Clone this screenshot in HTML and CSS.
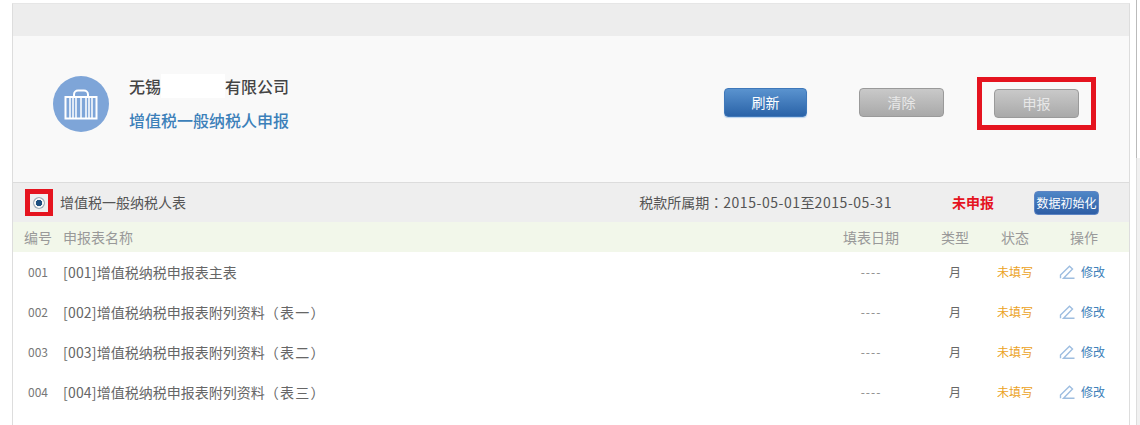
FILE: index.html
```html
<!DOCTYPE html>
<html lang="zh">
<head>
<meta charset="utf-8">
<title>增值税一般纳税人申报</title>
<link rel="stylesheet" href="styles.css">
</head>
<body>
<div class="scrollbar"><div class="scroll-thumb"></div></div>
<main class="panel">
  <div class="topbar"></div>
  <section class="hero">
    <svg class="logo" width="56" height="56" viewBox="0 0 56 56">
      <circle cx="28" cy="28" r="28" fill="#7ea5d8"/>
      <path d="M21 21v-2.500a4 4 0 0 1 4-4h6a4 4 0 0 1 4 4V21" fill="none" stroke="#fff" stroke-width="2"/>
      <rect x="12.500" y="21" width="31" height="21.500" fill="none" stroke="#fff" stroke-width="2"/>
      <path d="M17 22v20M20 22v20M23 22v20M28 22v20M33 22v20M36 22v20M39 22v20" stroke="#fff" stroke-width="1.500"/>
    </svg>
    <div class="hero-text">
      <div class="company"><span>无锡</span><span class="redacted"></span><span>有限公司</span></div>
      <div class="subtitle">增值税一般纳税人申报</div>
    </div>
    <div class="actions">
      <button class="btn btn-blue">刷新</button>
      <button class="btn btn-gray">清除</button>
      <div class="mark mark-btn"><button class="btn btn-gray">申报</button></div>
    </div>
  </section>
  <section class="section-bar">
    <div class="mark mark-radio"><span class="radio"></span></div>
    <span class="section-title">增值税一般纳税人表</span>
    <span class="period"><span lang="zh-TW">税款所属期：</span><span class="date">2015-05-01</span>至<span class="date">2015-05-31</span></span>
    <span class="unfiled">未申报</span>
    <button class="btn-init">数据初始化</button>
  </section>
  <div class="row row-head">
    <span>编号</span><span>申报表名称</span><span class="c">填表日期</span><span class="c">类型</span><span class="c">状态</span><span class="op-head">操作</span>
  </div>
  <div class="row">
    <span class="no">001</span><span class="name"><span class="code">[001]</span>增值税纳税申报表主表</span><span class="c dash">----</span><span class="c cell">月</span><span class="c status">未填写</span>
    <a class="op"><svg class="pen" width="16" height="14" viewBox="0 0 16 14"><path d="M1.500 13.200V10l9-8.800 3 2.800-9 9.200H15.500" fill="none" stroke="#9dbde0" stroke-width="1.400"/></svg>修改</a>
  </div>
  <div class="row">
    <span class="no">002</span><span class="name"><span class="code">[002]</span>增值税纳税申报表附列资料<span class="suffix">（表一）</span></span><span class="c dash">----</span><span class="c cell">月</span><span class="c status">未填写</span>
    <a class="op"><svg class="pen" width="16" height="14" viewBox="0 0 16 14"><path d="M1.500 13.200V10l9-8.800 3 2.800-9 9.200H15.500" fill="none" stroke="#9dbde0" stroke-width="1.400"/></svg>修改</a>
  </div>
  <div class="row">
    <span class="no">003</span><span class="name"><span class="code">[003]</span>增值税纳税申报表附列资料<span class="suffix">（表二）</span></span><span class="c dash">----</span><span class="c cell">月</span><span class="c status">未填写</span>
    <a class="op"><svg class="pen" width="16" height="14" viewBox="0 0 16 14"><path d="M1.500 13.200V10l9-8.800 3 2.800-9 9.200H15.500" fill="none" stroke="#9dbde0" stroke-width="1.400"/></svg>修改</a>
  </div>
  <div class="row">
    <span class="no">004</span><span class="name"><span class="code">[004]</span>增值税纳税申报表附列资料<span class="suffix">（表三）</span></span><span class="c dash">----</span><span class="c cell">月</span><span class="c status">未填写</span>
    <a class="op"><svg class="pen" width="16" height="14" viewBox="0 0 16 14"><path d="M1.500 13.200V10l9-8.800 3 2.800-9 9.200H15.500" fill="none" stroke="#9dbde0" stroke-width="1.400"/></svg>修改</a>
  </div>
  <div class="row">
    <span class="no">005</span><span class="name"><span class="code">[005]</span>增值税纳税申报表附列资料<span class="suffix">（表四）</span></span><span class="c dash">----</span><span class="c cell">月</span><span class="c status">未填写</span>
    <a class="op"><svg class="pen" width="16" height="14" viewBox="0 0 16 14"><path d="M1.500 13.200V10l9-8.800 3 2.800-9 9.200H15.500" fill="none" stroke="#9dbde0" stroke-width="1.400"/></svg>修改</a>
  </div>
</main>
</body>
</html>
```
FILE: styles.css
```css
* { box-sizing: border-box; }
html, body { height: 425px; overflow: hidden; }
body {
  margin: 0;
  padding: 3px 0 0 12px;
  background: #fff;
  font-family: "Noto Sans CJK SC", "Liberation Sans", sans-serif;
  color: #555;
}
[lang="zh-TW"] { font-family: "Noto Sans CJK TC", "Noto Sans CJK SC", sans-serif; }
.scrollbar {
  position: absolute;
  top: 0;
  left: 1136px;
  width: 4px;
  height: 425px;
  background: #f1f1f1;
  border-left: 1px solid #ddd;
}
.scroll-thumb { height: 158px; background: #fff; border-left: 1px solid #bbb; margin-left: -1px; }
.panel {
  width: 1118px;
  border-left: 1px solid #ddd;
  border-right: 1px solid #ddd;
  border-top: 1px solid #e6e6e6;
  background: #fff;
}
.topbar { height: 32px; background: #ededed; }
.hero {
  display: flex;
  align-items: flex-start;
  height: 147px;
  padding: 40px 33px 0 40px;
  background: #f9f9f9;
  border-bottom: 1px solid #dcdcdc;
}
.logo { flex: none; }
.hero-text { margin-left: 20px; margin-top: -2px; font-size: 16px; font-weight: 500; }
.company { display: flex; height: 24px; line-height: 24px; color: #444; }
.redacted { width: 64px; background: #fff; }
.subtitle { margin-top: 10px; height: 24px; line-height: 24px; color: #3c80b9; }
.actions { display: flex; margin-left: auto; margin-top: 12px; align-items: flex-start; }
.btn {
  width: 85px;
  height: 29px;
  padding: 0;
  border-radius: 4px;
  font: 14px/27px "Noto Sans CJK SC", "Liberation Sans", sans-serif;
  color: #fff;
}
.btn-blue {
  width: 83px;
  background: linear-gradient(#5a93cf, #2a63a8);
  border: 1px solid #3f78ba;
  box-shadow: 0 1px 1px #b9d2ee;
}
.btn-gray {
  margin-left: 52px;
  background: linear-gradient(#c9c9c9, #a9a9a9);
  border: 1px solid #9a9a9a;
  color: #e8e8e8;
}
.mark { border: solid #e5141f; }
.mark-btn {
  display: flex;
  align-items: center;
  justify-content: center;
  width: 119px;
  height: 53px;
  margin-left: 33px;
  margin-top: -11px;
  border-width: 5px;
  background: #f9f9f9;
}
.mark-btn .btn-gray { margin-left: 0; margin-top: -1px; flex: none; }
.section-bar {
  display: flex;
  align-items: center;
  height: 39px;
  padding-left: 12px;
  background: #eee;
  font-size: 14px;
  line-height: 20px;
  color: #555;
}
.section-title { margin-left: 7px; margin-top: -1px; }
.mark-radio {
  display: flex;
  align-items: center;
  justify-content: center;
  width: 28px;
  height: 27px;
  border-width: 5px 5px 4px;
  background: #f0f0f0;
}
.radio {
  width: 12px;
  height: 12px;
  border-radius: 50%;
  background: radial-gradient(circle, #1d4f80 0 3px, #f5f5f5 3.500px 4.500px, #a2aeb9 5px);
}
.period { margin-left: auto; margin-top: -1px; white-space: nowrap; }
.date { letter-spacing: .55px; }
.unfiled { margin-left: 60px; margin-top: -1px; font-weight: 700; color: #e5141f; }
.btn-init {
  width: 65px;
  height: 24px;
  margin-left: 40px;
  margin-right: 30px;
  padding: 0;
  border: 1px solid #5d84c4;
  border-radius: 4px;
  background: linear-gradient(#4f86c6, #2e5ea5);
  color: #fff;
  font: 12px/22px "Noto Sans CJK SC", "Liberation Sans", sans-serif;
}
.row {
  display: grid;
  grid-template-columns: 39px 1fr 84px 84px 36px 96px;
  align-items: center;
  height: 40px;
  padding-left: 11px;
  font-size: 14px;
  line-height: 20px;
  color: #666;
}
.row-head {
  height: 30px;
  background: #f2f7ea;
  color: #999;
}
.code { letter-spacing: .2px; }
.suffix { letter-spacing: 1.2px; }
.c { text-align: center; white-space: nowrap; }
.no { font-size: 12px; color: #777; padding-left: 4px; }
.dash { color: #888; font-size: 12px; letter-spacing: 1px; }
.cell { font-size: 12px; }
.status { font-size: 12px; color: #eba224; }
.op-head { padding-left: 37px; }
.op {
  display: flex;
  align-items: center;
  gap: 6px;
  padding-left: 26px;
  font-size: 12px;
  color: #3c80b9;
}
.pen { flex: none; }
```
